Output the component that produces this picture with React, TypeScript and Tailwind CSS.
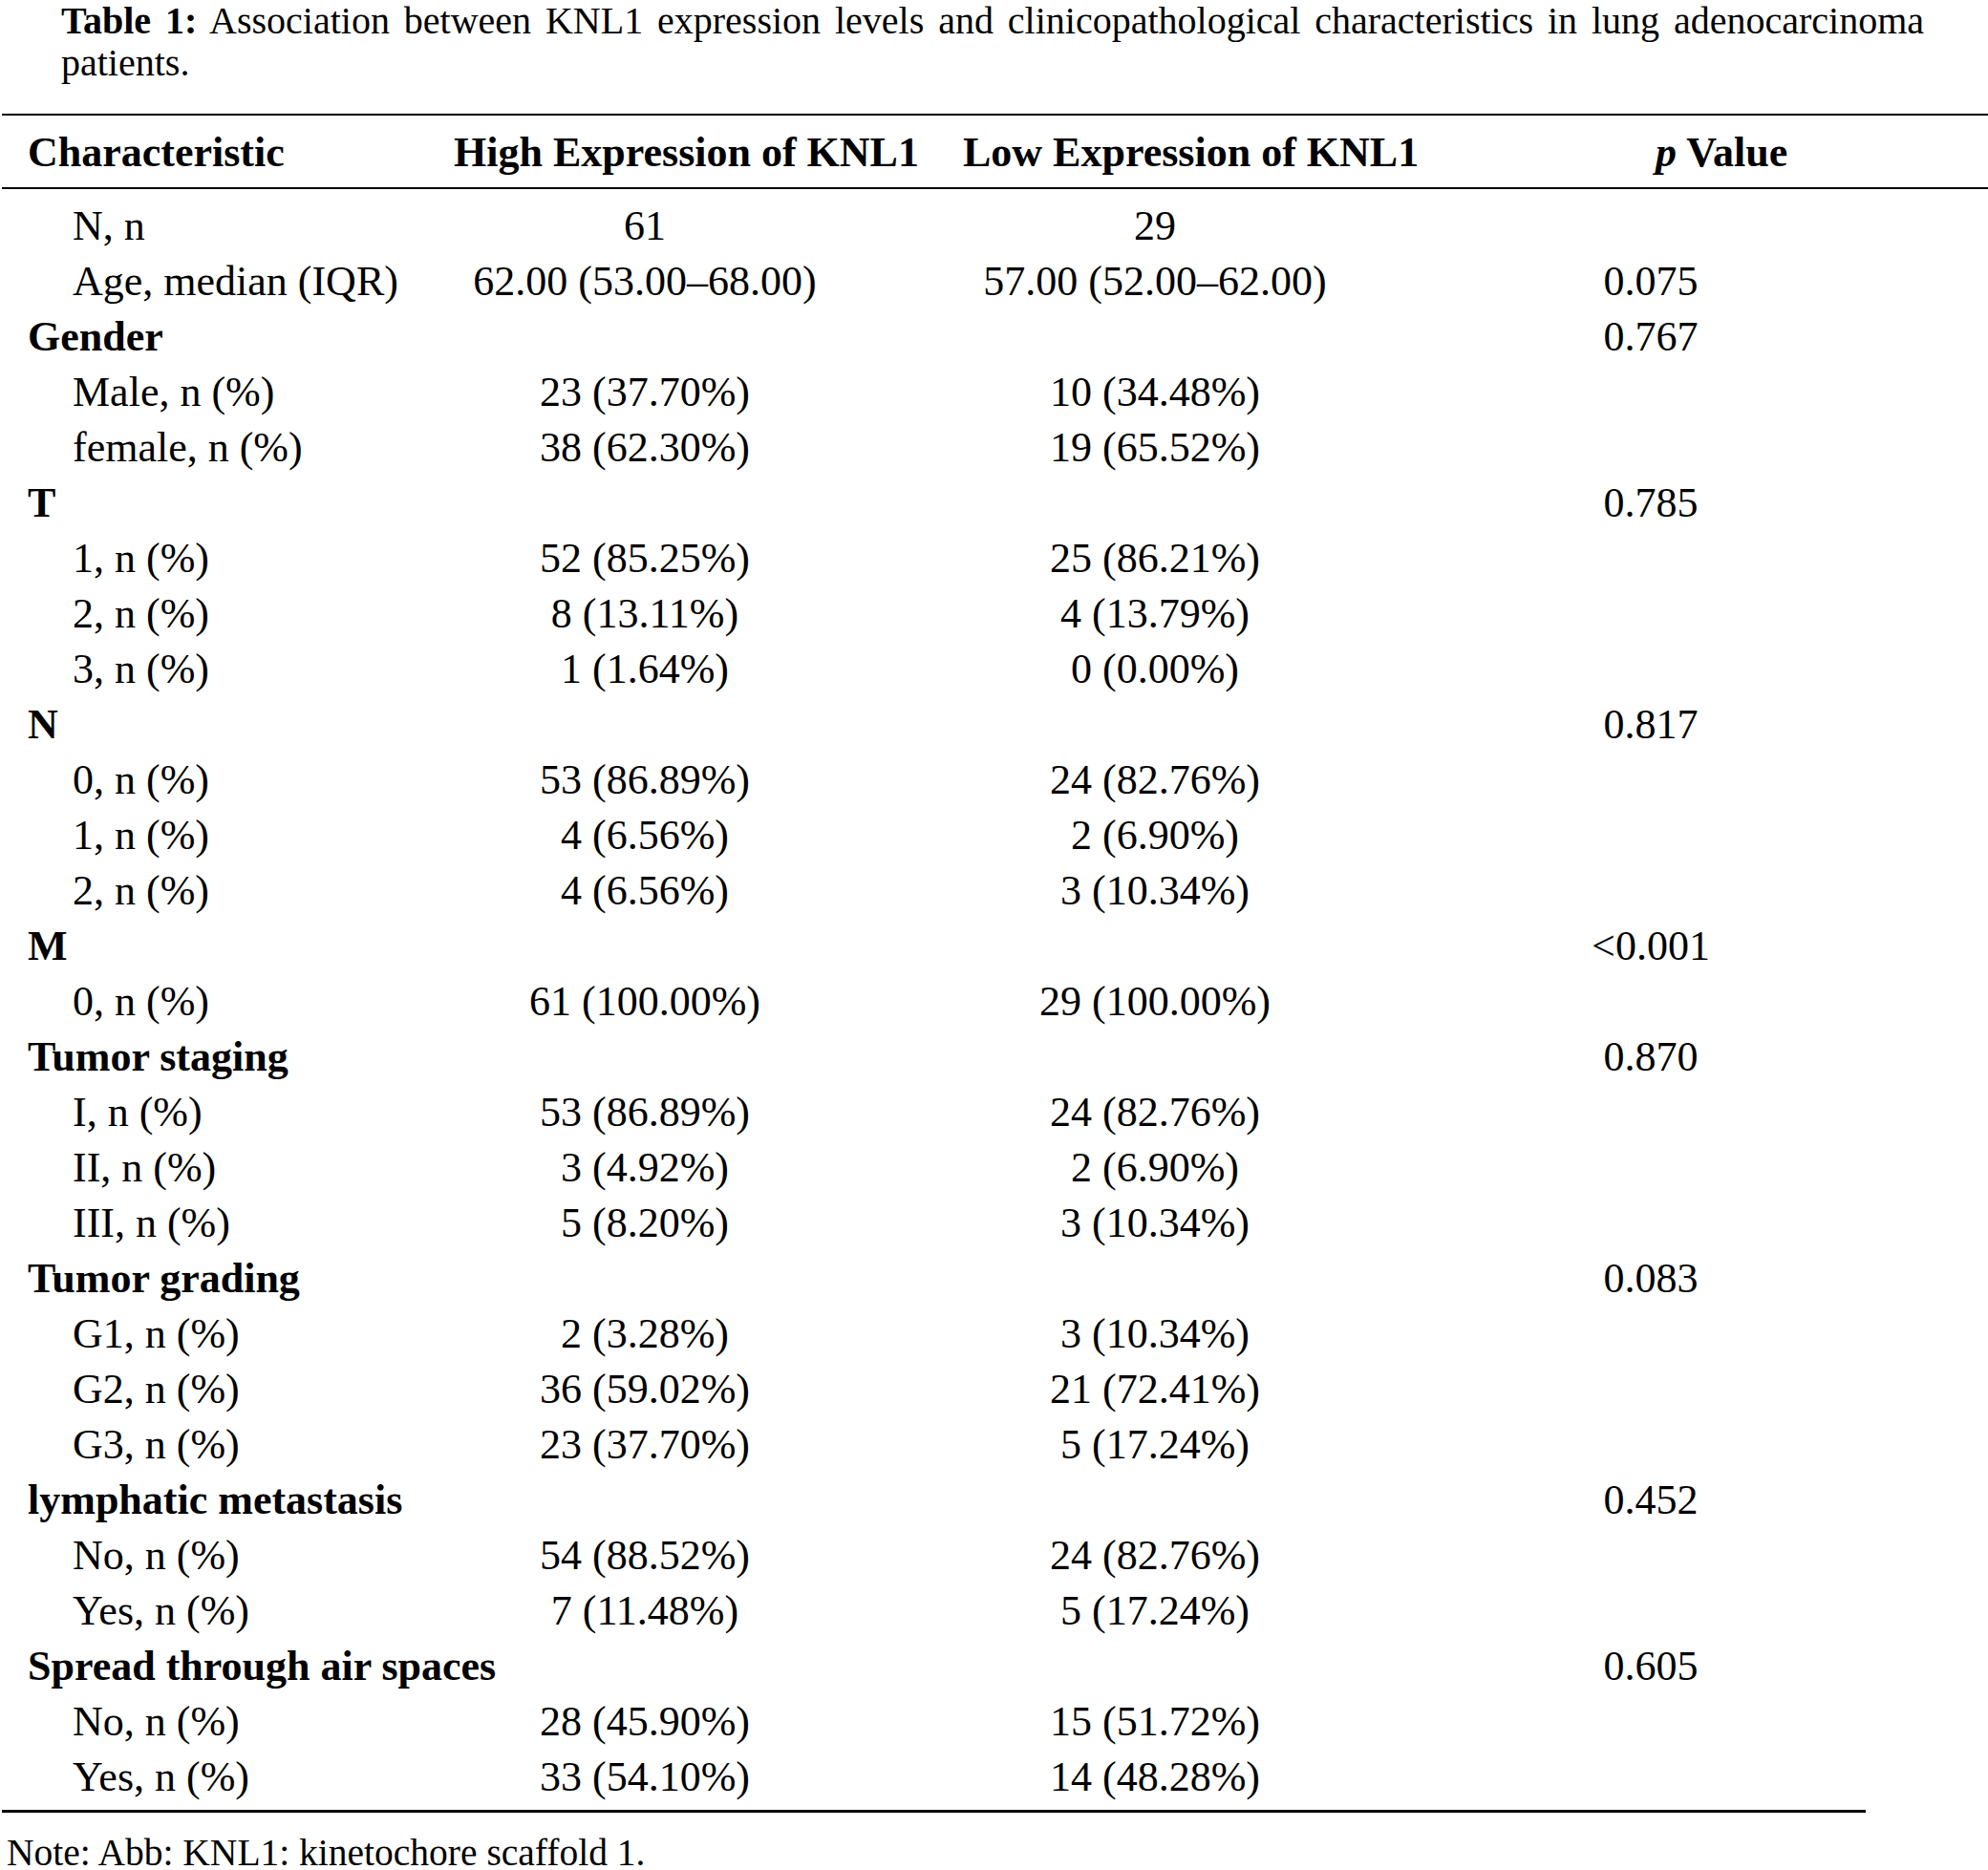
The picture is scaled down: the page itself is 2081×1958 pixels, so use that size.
import React from 'react';

type Row = {
  label: string;
  group?: boolean;
  high?: string;
  low?: string;
  p?: string;
};

const ROWS: Row[] = [
  { label: 'N, n', high: '61', low: '29' },
  { label: 'Age, median (IQR)', high: '62.00 (53.00–68.00)', low: '57.00 (52.00–62.00)', p: '0.075' },
  { label: 'Gender', group: true, p: '0.767' },
  { label: 'Male, n (%)', high: '23 (37.70%)', low: '10 (34.48%)' },
  { label: 'female, n (%)', high: '38 (62.30%)', low: '19 (65.52%)' },
  { label: 'T', group: true, p: '0.785' },
  { label: '1, n (%)', high: '52 (85.25%)', low: '25 (86.21%)' },
  { label: '2, n (%)', high: '8 (13.11%)', low: '4 (13.79%)' },
  { label: '3, n (%)', high: '1 (1.64%)', low: '0 (0.00%)' },
  { label: 'N', group: true, p: '0.817' },
  { label: '0, n (%)', high: '53 (86.89%)', low: '24 (82.76%)' },
  { label: '1, n (%)', high: '4 (6.56%)', low: '2 (6.90%)' },
  { label: '2, n (%)', high: '4 (6.56%)', low: '3 (10.34%)' },
  { label: 'M', group: true, p: '<0.001' },
  { label: '0, n (%)', high: '61 (100.00%)', low: '29 (100.00%)' },
  { label: 'Tumor staging', group: true, p: '0.870' },
  { label: 'I, n (%)', high: '53 (86.89%)', low: '24 (82.76%)' },
  { label: 'II, n (%)', high: '3 (4.92%)', low: '2 (6.90%)' },
  { label: 'III, n (%)', high: '5 (8.20%)', low: '3 (10.34%)' },
  { label: 'Tumor grading', group: true, p: '0.083' },
  { label: 'G1, n (%)', high: '2 (3.28%)', low: '3 (10.34%)' },
  { label: 'G2, n (%)', high: '36 (59.02%)', low: '21 (72.41%)' },
  { label: 'G3, n (%)', high: '23 (37.70%)', low: '5 (17.24%)' },
  { label: 'lymphatic metastasis', group: true, p: '0.452' },
  { label: 'No, n (%)', high: '54 (88.52%)', low: '24 (82.76%)' },
  { label: 'Yes, n (%)', high: '7 (11.48%)', low: '5 (17.24%)' },
  { label: 'Spread through air spaces', group: true, p: '0.605' },
  { label: 'No, n (%)', high: '28 (45.90%)', low: '15 (51.72%)' },
  { label: 'Yes, n (%)', high: '33 (54.10%)', low: '14 (48.28%)' },
];

const cols = 'grid grid-cols-[448px_450px_618px_420px]';

const App: React.FC = () => {
  return (
    <div className="min-h-screen w-[2081px] bg-white text-black font-['Liberation_Serif',serif] overflow-hidden">
      {/* Caption */}
      <p className="ml-[64px] w-[1950px] text-[40px] leading-[44px] text-justify">
        <span className="font-bold">Table 1:</span> Association between KNL1 expression levels and clinicopathological characteristics in lung adenocarcinoma patients.
      </p>

      {/* Table */}
      <div className="ml-[2px] mt-[31px]">
        <div className="h-[2px] bg-black" />
        <div className={`${cols} pt-[15px] pb-[12px] text-[44px] leading-[48px] font-bold whitespace-nowrap`}>
          <div className="pl-[27px]">Characteristic</div>
          <div className="pl-[25px]">High Expression of KNL1</div>
          <div className="pl-[108px]">Low Expression of KNL1</div>
          <div className="pl-[215px]">
            <span className="italic">p</span> Value
          </div>
        </div>
        <div className="h-[2px] bg-black" />

        <div className="pt-[10px] pb-[5px] text-[44px] leading-[58px] whitespace-nowrap">
          {ROWS.map((r, i) => (
            <div key={i} className={cols}>
              <div className={r.group ? 'pl-[27px] font-bold' : 'pl-[74px]'}>{r.label}</div>
              <div className="text-center">{r.high ?? ''}</div>
              <div className="text-center">{r.low ?? ''}</div>
              <div className="text-center">{r.p ?? ''}</div>
            </div>
          ))}
        </div>
        <div className="h-[3px] w-[1951px] bg-black" />
      </div>

      <p className="ml-[7px] mt-[20px] text-[39.5px] leading-[44px]">Note: Abb: KNL1: kinetochore scaffold 1.</p>
    </div>
  );
};

export default App;
